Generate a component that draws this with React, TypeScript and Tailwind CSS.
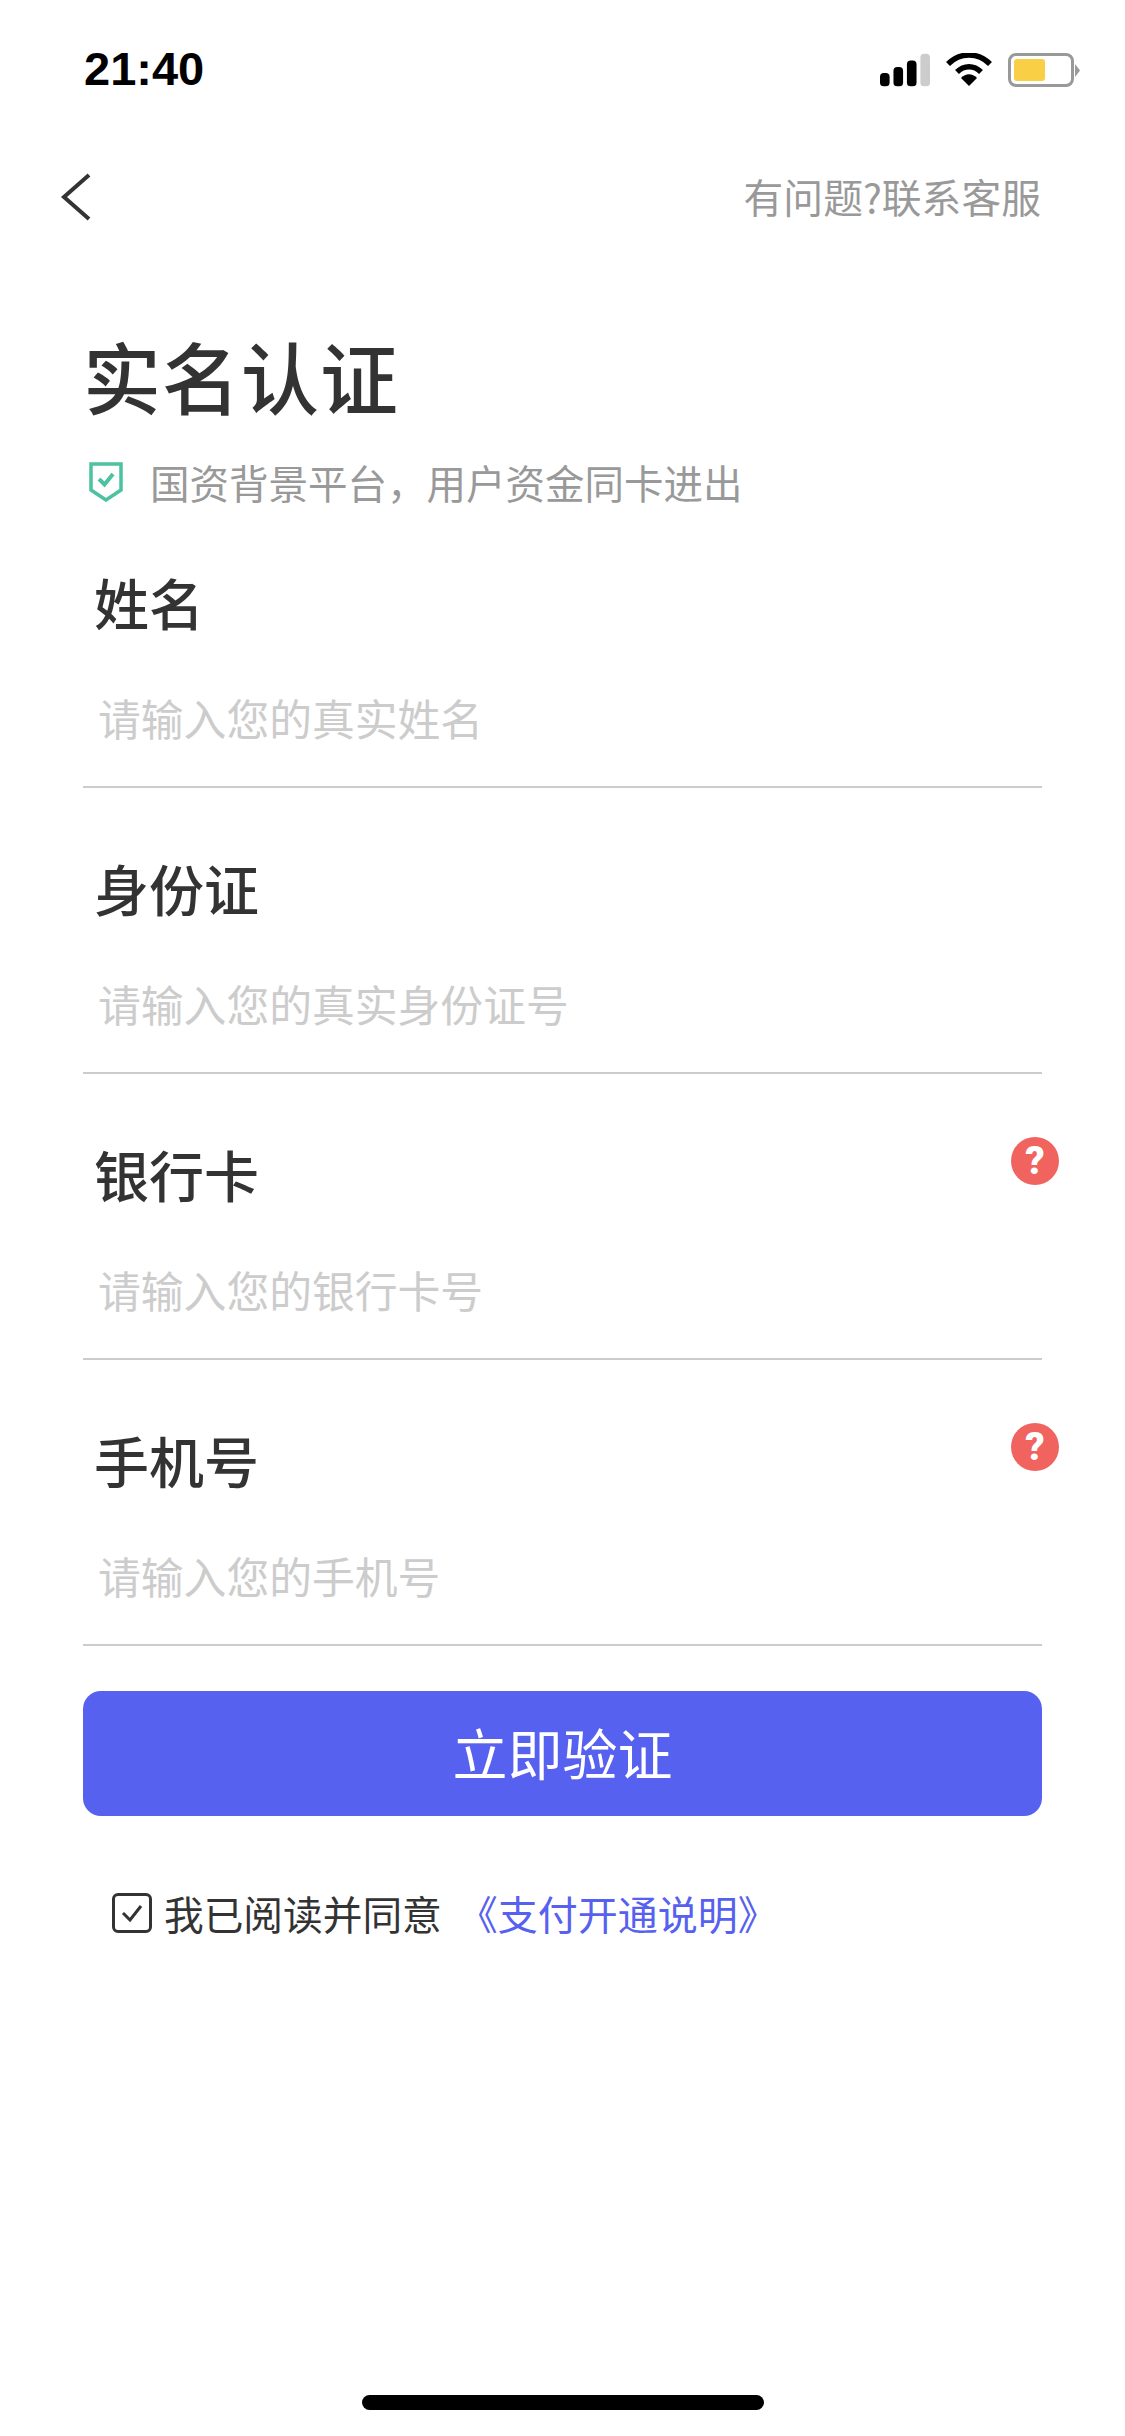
const cjk = "font-['Noto_Sans_CJK_SC','Liberation_Sans',sans-serif]";

function Help() {
  return (
    <span className="absolute right-[-17px] top-[3px] flex h-[48px] w-[48px] items-center justify-center rounded-full bg-[#f0635f] font-['Roboto',sans-serif] text-[38px] font-black leading-none text-white">
      ?
    </span>
  );
}

function Field({ label, placeholder, help }: { label: string; placeholder: string; help?: boolean }) {
  return (
    <div className="relative">
      <div className="flex h-[286px] flex-col border-b-2 border-[#cccccc]">
        <div className="relative mt-[60px] h-[78px] pl-[11px] text-[55px] font-medium leading-[78px] text-[#333333]">
          {label}
          {help && <Help />}
        </div>
        <div className="mt-[47px] pl-[15px] text-[42.8px] leading-[60px] text-[#cccccc]">{placeholder}</div>
      </div>
    </div>
  );
}

export default function App() {
  return (
    <div className={`flex h-[2436px] w-[1125px] flex-col bg-white ${cjk}`}>
      <div className="flex h-[131px] items-start justify-between pl-[84px] pr-[45px] pt-[40px]">
        <span className="font-['Liberation_Sans',sans-serif] text-[47px] font-bold leading-[58px] text-black">21:40</span>
        <div className="mt-[13px] flex items-center gap-[16px]">
          <svg width="50" height="34" viewBox="0 0 52 34">
            <rect x="0" y="20" width="10" height="14" rx="4" fill="#000" />
            <rect x="14" y="14" width="10" height="20" rx="4" fill="#000" />
            <rect x="28" y="7" width="10" height="27" rx="4" fill="#000" />
            <rect x="42" y="0" width="10" height="34" rx="4" fill="#cccccc" />
          </svg>
          <svg width="46" height="34" viewBox="0 0 46 34">
            <path d="M2 11 C14 -1 32 -1 44 11" fill="none" stroke="#000" strokeWidth="5.5" />
            <path d="M11 19 C18 12 28 12 35 19" fill="none" stroke="#000" strokeWidth="5.5" />
            <path d="M15 25 C20 20 26 20 31 25 L23 33 Z" fill="#000" />
          </svg>
          <div className="flex items-center">
            <div className="flex h-[34px] w-[66px] items-center rounded-[8px] border-[3px] border-[#999999] p-[3px]">
              <div className="h-[22px] w-[31px] rounded-[3px] bg-[#f8cf45]" />
            </div>
            <svg width="5" height="13" viewBox="0 0 5 13" className="ml-[1px]">
              <path d="M0 0 L5 6.5 L0 13 Z" fill="#999999" />
            </svg>
          </div>
        </div>
      </div>

      <div className="flex h-[132px] items-center justify-between pl-[60px] pr-[84px]">
        <svg width="32" height="50" viewBox="0 0 32 50">
          <path d="M29 3 L4 25 L29 47" fill="none" stroke="#333333" strokeWidth="4" />
        </svg>
        <span className="pb-[2px] text-[39.8px] leading-[60px] text-[#999999]">有问题?联系客服</span>
      </div>

      <div className="flex flex-col px-[83px]">
        <h1 className="mt-[64px] h-[96px] text-[78px] font-medium leading-[96px] tracking-[1px] text-[#333333]">实名认证</h1>
        <div className="mt-[29px] flex h-[60px] items-center pl-[6px]">
          <svg width="34" height="40" viewBox="0 0 34 40">
            <path d="M2 2 H32 V28 L17 38 L2 28 Z" fill="none" stroke="#4cc2a0" strokeWidth="3.5" />
            <path d="M10 17 L15.5 22.5 L24 12" fill="none" stroke="#4cc2a0" strokeWidth="4" />
          </svg>
          <span className="ml-[27px] text-[39.5px] leading-[60px] text-[#999999]">国资背景平台，用户资金同卡进出</span>
        </div>
        <div className="mt-[-10px] flex flex-col">
          <Field label="姓名" placeholder="请输入您的真实姓名" />
          <Field label="身份证" placeholder="请输入您的真实身份证号" />
          <Field label="银行卡" placeholder="请输入您的银行卡号" help />
          <Field label="手机号" placeholder="请输入您的手机号" help />
        </div>
        <button className="mt-[45px] flex h-[125px] w-full items-center justify-center rounded-[18px] bg-[#5661ef] pb-[5px] text-[55px] leading-none text-white">
          立即验证
        </button>
        <div className="mt-[67px] flex h-[60px] items-center pl-[29px]">
          <span className="flex h-[40px] w-[40px] items-center justify-center rounded-[6px] border-[3px] border-[#333333]">
            <svg width="24" height="22" viewBox="0 0 24 22">
              <path d="M3 11 L10 18 L21 4" fill="none" stroke="#333333" strokeWidth="3" />
            </svg>
          </span>
          <span className="ml-[12px] text-[39.7px] leading-[60px] text-[#333333]">我已阅读并同意</span>
          <span className="ml-[16px] text-[40px] leading-[60px] text-[#5661ef]">《支付开通说明》</span>
        </div>
      </div>

      <div className="mt-auto mb-[26px] flex justify-center">
        <div className="h-[15px] w-[402px] rounded-full bg-black" />
      </div>
    </div>
  );
}
